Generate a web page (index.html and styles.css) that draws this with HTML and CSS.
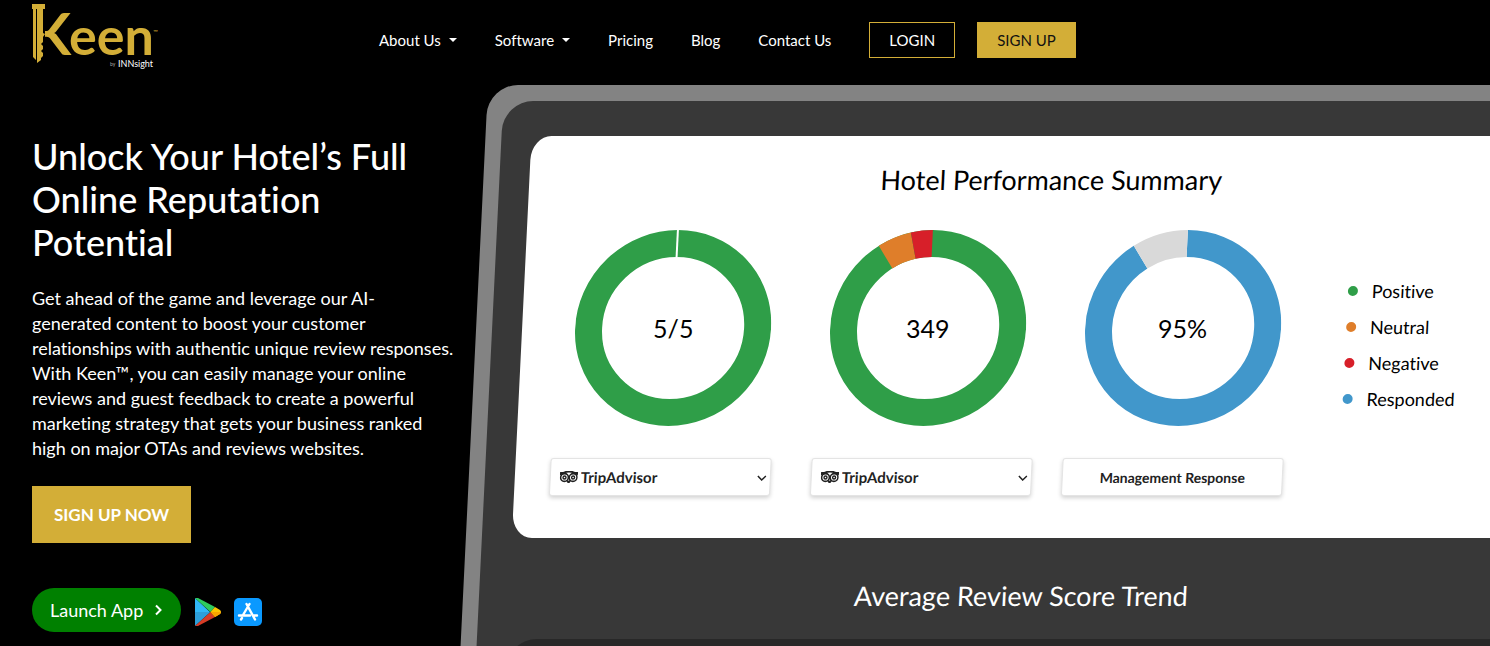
FILE: index.html
```html
<!DOCTYPE html>
<html lang="en">
<head>
<meta charset="utf-8">
<meta name="viewport" content="width=device-width, initial-scale=1">
<title>Keen by INNsight</title>
<link rel="stylesheet" href="styles.css">
</head>
<body>
<header class="site-header">
  <a class="brand" href="#" aria-label="Keen by INNsight">
    <svg class="brand-logo" width="130" height="72" viewBox="0 0 130 72">
      <g class="brand-name">
        <text class="brand-k" x="0" y="55">K</text>
        <text class="brand-een" x="37" y="55">een</text>
      </g>
      <path class="brand-gap" d="M0 4h13v58H0z"/>
      <path class="brand-key" d="M0 4h13v5H0zM1 9h3v51l-3-3zM5 9h6v24l2 1-2 3v5l-2 2 2 2v3l-2 2 2 2v3l-2 2v2l-4 3z"/>
      <text class="brand-tm" x="121" y="34">™</text>
      <text class="brand-by" x="78" y="66">by</text>
      <text class="brand-owner" x="86" y="67">INNsight</text>
    </svg>
  </a>
  <nav class="nav" aria-label="Main">
    <a class="nav-link has-menu" href="#">About Us</a>
    <a class="nav-link has-menu" href="#">Software</a>
    <a class="nav-link" href="#">Pricing</a>
    <a class="nav-link" href="#">Blog</a>
    <a class="nav-link" href="#">Contact Us</a>
    <div class="nav-actions">
      <a class="nav-button" href="#">LOGIN</a>
      <a class="nav-button nav-button-gold" href="#">SIGN UP</a>
    </div>
  </nav>
</header>

<main class="hero">
  <section class="intro">
    <h1 class="intro-title">Unlock Your Hotel’s Full Online Reputation Potential</h1>
    <p class="intro-text">Get ahead of the game and leverage our AI-<br>generated content to boost your customer relationships with authentic unique review responses. With Keen™, you can easily manage your online reviews and guest feedback to create a powerful marketing strategy that gets your business ranked high on major OTAs and reviews websites.</p>
    <a class="cta" href="#">SIGN UP NOW</a>
    <div class="apps">
      <a class="launch" href="#">Launch App
        <svg width="8" height="12" viewBox="0 0 8 12" fill="none" stroke="#fff" stroke-width="2" aria-hidden="true"><path d="M1 1.500l4.500 4.500L1 10.500"/></svg>
      </a>
      <a class="store" href="#" aria-label="Google Play">
        <svg width="26" height="28" viewBox="0 0 26 28"><path fill="#30b7f6" d="M0 0v14h15z"/><path fill="#2d9fd9" d="M0 14v14L15.500 14z"/><path fill="#2ecc5e" d="M0 0h3l17 9-4.500 5z"/><path fill="#d63c26" d="M0 28h3l17-9-4.500-5z"/><path fill="#fdc500" d="M15.500 14L20 9l5 3q2 2 0 4l-5 3z"/><path fill="#fba400" d="M15.500 14H26q0 1-1 2l-5 3z"/></svg>
      </a>
      <a class="store" href="#" aria-label="App Store">
        <svg width="28" height="28" viewBox="0 0 28 28"><rect width="28" height="28" rx="5" fill="#0a99ff"/><g fill="none" stroke="#fff" stroke-width="2.400" stroke-linecap="round"><path d="M15.500 6L9 17M12.500 6l8.500 15.500M5 17.500h11M20 17.500h3M8 20l-1 1.500"/></g></svg>
      </a>
    </div>
  </section>

  <section class="device" aria-label="Dashboard preview">
    <div class="screen">
      <div class="card">
        <h2 class="card-title">Hotel Performance Summary</h2>
        <div class="card-body">
          <div class="metrics">
            <div class="donuts">
              <div class="donut">
                <svg class="ring" viewBox="0 0 196 196" aria-hidden="true">
                  <circle class="arc green" cx="98" cy="98" r="84.500"/>
                  <path stroke="#fff" stroke-width="2" d="M98 0v27"/>
                </svg>
                <span class="donut-value">5/5</span>
              </div>
              <div class="donut">
                <svg class="ring" viewBox="0 0 196 196" aria-hidden="true">
                  <circle class="arc green" cx="98" cy="98" r="84.500"/>
                  <circle class="arc orange" cx="98" cy="98" r="84.500" pathLength="360" stroke-dasharray="20 340" stroke-dashoffset="-327"/>
                  <circle class="arc red" cx="98" cy="98" r="84.500" pathLength="360" stroke-dasharray="13 347" stroke-dashoffset="-347"/>
                </svg>
                <span class="donut-value">349</span>
              </div>
              <div class="donut">
                <svg class="ring" viewBox="0 0 196 196" aria-hidden="true">
                  <circle class="arc blue" cx="98" cy="98" r="84.500" pathLength="360" stroke-dasharray="327 33"/>
                  <circle class="arc gray" cx="98" cy="98" r="84.500" pathLength="360" stroke-dasharray="33 327" stroke-dashoffset="-327"/>
                </svg>
                <span class="donut-value">95%</span>
              </div>
            </div>
            <div class="controls">
              <div class="picker">
                <svg class="owl" width="18" height="12" viewBox="0 0 18 12" aria-hidden="true"><use href="#owl"/></svg>
                <select class="control picker-select" aria-label="Score source"><option>TripAdvisor</option></select>
                <svg class="chevron" width="10" height="6" viewBox="0 0 10 6" aria-hidden="true"><path d="M1 1l4 4 4-4"/></svg>
              </div>
              <div class="picker">
                <svg class="owl" width="18" height="12" viewBox="0 0 18 12" aria-hidden="true">
                  <g id="owl" fill="none" stroke="#222"><path stroke-width="2" d="M0 2h3.500Q9-1 14.500 2H18l-1.500 2M0 2l1.500 2M7.500 9.500L9 11.500l1.500-2"/><circle cx="4.700" cy="6.500" r="3.900" stroke-width="1.600"/><circle cx="13.300" cy="6.500" r="3.900" stroke-width="1.600"/><circle cx="4.700" cy="6.500" r="1.500" stroke-width="1.400"/><circle cx="13.300" cy="6.500" r="1.500" stroke-width="1.400"/></g>
                </svg>
                <select class="control picker-select" aria-label="Review count source"><option>TripAdvisor</option></select>
                <svg class="chevron" width="10" height="6" viewBox="0 0 10 6" aria-hidden="true"><path d="M1 1l4 4 4-4"/></svg>
              </div>
              <button class="control" type="button">Management Response</button>
            </div>
          </div>
          <ul class="legend">
            <li class="legend-item positive">Positive</li>
            <li class="legend-item neutral">Neutral</li>
            <li class="legend-item negative">Negative</li>
            <li class="legend-item responded">Responded</li>
          </ul>
        </div>
      </div>
      <h2 class="trend-title">Average Review Score Trend</h2>
      <div class="trend"></div>
    </div>
  </section>
</main>
</body>
</html>
```
FILE: styles.css
```css
* { box-sizing: border-box; }

body {
  margin: 0;
  height: 100vh;
  display: flex;
  flex-direction: column;
  overflow: hidden;
  background: #000;
  color: #fff;
  font-family: Lato, "Open Sans", sans-serif;
  font-variant-ligatures: none;
}

a { color: inherit; text-decoration: none; }

/* Header */
.site-header {
  flex: none;
  display: flex;
  align-items: flex-start;
  height: 85px;
  padding-left: 32px;
}
.brand { width: 347px; flex: none; }
.brand-logo { display: block; }
.brand-name { fill: #d3ae37; font-weight: 700; }
.brand-k { font-size: 57px; }
.brand-een { font-size: 52px; }
.brand-gap { fill: #000; }
.brand-key { fill: #d3ae37; }
.brand-tm { fill: #d3ae37; font-size: 6px; }
.brand-by { fill: #aaa; font-size: 5px; }
.brand-owner { fill: #fff; font-size: 9px; }

.nav {
  display: flex;
  align-items: center;
  gap: 38px;
  padding-top: 22px;
  font-size: 15px;
  line-height: 24px;
  white-space: nowrap;
}
.nav-link { display: flex; align-items: center; gap: 8px; }
.has-menu::after {
  content: "";
  border: 4px solid transparent;
  border-top-color: #fff;
  border-bottom: 0;
}
.nav-actions { display: flex; gap: 22px; }
.nav-button {
  height: 36px;
  padding: 0 19px;
  border: 1px solid #d3ae37;
  line-height: 34px;
}
.nav-button-gold { background: #d3ae37; color: #111; }

/* Hero */
.hero {
  flex: 1;
  min-height: 0;
  display: grid;
  grid-template-columns: 426px minmax(0, 1fr);
  gap: 30px;
  padding-left: 32px;
  overflow: hidden;
}
.intro-title {
  margin: 50px 0 22px;
  font-size: 36px;
  line-height: 43px;
  font-weight: 500;
}
.intro-text {
  margin: 0 0 25px;
  font-size: 18px;
  line-height: 25px;
}
.cta {
  display: inline-block;
  padding: 0 22px;
  background: #d3ae37;
  font-size: 17px;
  line-height: 57px;
  font-weight: 700;
}
.apps { display: flex; align-items: center; margin-top: 45px; }
.launch {
  display: flex;
  align-items: center;
  gap: 12px;
  height: 44px;
  margin-right: 14px;
  padding: 0 18px;
  border-radius: 22px;
  background: #008000;
  font-size: 18px;
}
.store { display: flex; margin: 4px 13px 0 0; }

/* Slanted device preview, running off the right side */
.device {
  display: flex;
  margin-right: -134px;
  padding: 16px 16px 0;
  border-radius: 30px 30px 0 0;
  background: #838383;
  transform: skewX(-2.8deg);
  transform-origin: 0 0;
}
.screen {
  flex: 1;
  display: flex;
  flex-direction: column;
  padding: 35px 30px 0;
  border-radius: 30px 30px 0 0;
  background: #383838;
}
.card {
  padding: 28px 35px 42px;
  border-radius: 20px / 24px;
  background: #fff;
  color: #000;
}
.card-title,
.trend-title {
  margin: 0;
  font-size: 27px;
  line-height: 32px;
  font-weight: 400;
  text-align: center;
}
.card-body { display: flex; gap: 56px; margin-top: 34px; }
.donuts { display: flex; gap: 59px; padding-left: 18px; }
.donut { display: grid; place-items: center; }
.donut > * { grid-area: 1 / 1; }
.ring { width: 196px; height: 196px; }
.arc {
  fill: none;
  stroke-width: 27;
  transform: rotate(-90deg);
  transform-origin: center;
}
.green { stroke: #2f9e48; }
.orange { stroke: #df7e2a; }
.red { stroke: #d71f29; }
.blue { stroke: #4197cb; }
.gray { stroke: #d9d9d9; }
.donut-value { font-size: 25px; transform: skewX(2.8deg); }

.controls {
  display: grid;
  grid-template-columns: 231px 221px 221px;
  gap: 30px;
  align-items: start;
  margin-top: 32px;
}
.picker { position: relative; width: 221px; }
.control {
  width: 100%;
  height: 38px;
  border: 1px solid #e4e4e4;
  border-radius: 3px;
  background: #fff;
  color: #222;
  box-shadow: 0 2px 4px rgba(0, 0, 0, 0.18);
  font-family: inherit;
  font-size: 14px;
  font-weight: 700;
}
.picker-select { appearance: none; padding: 0 30px; font-size: 15px; }
.owl { position: absolute; left: 10px; top: 13px; }
.chevron {
  position: absolute;
  right: 4px;
  top: 17px;
  fill: none;
  stroke: #222;
  stroke-width: 1.5;
}

.legend {
  margin: 43px 0 0;
  padding: 0;
  list-style: none;
  font-size: 18px;
  line-height: 36px;
}
.legend-item { display: flex; align-items: center; gap: 14px; }
.legend-item::before {
  content: "";
  width: 10px;
  height: 10px;
  border-radius: 50%;
  background: #2f9e48;
}
.neutral::before { background: #df7e2a; }
.negative::before { background: #d71f29; }
.responded::before { background: #4197cb; }

.trend-title { margin: 42px 20px 27px 0; }
.trend {
  flex: 1;
  min-height: 120px;
  border-radius: 30px 30px 0 0;
  background: #282828;
}
```
